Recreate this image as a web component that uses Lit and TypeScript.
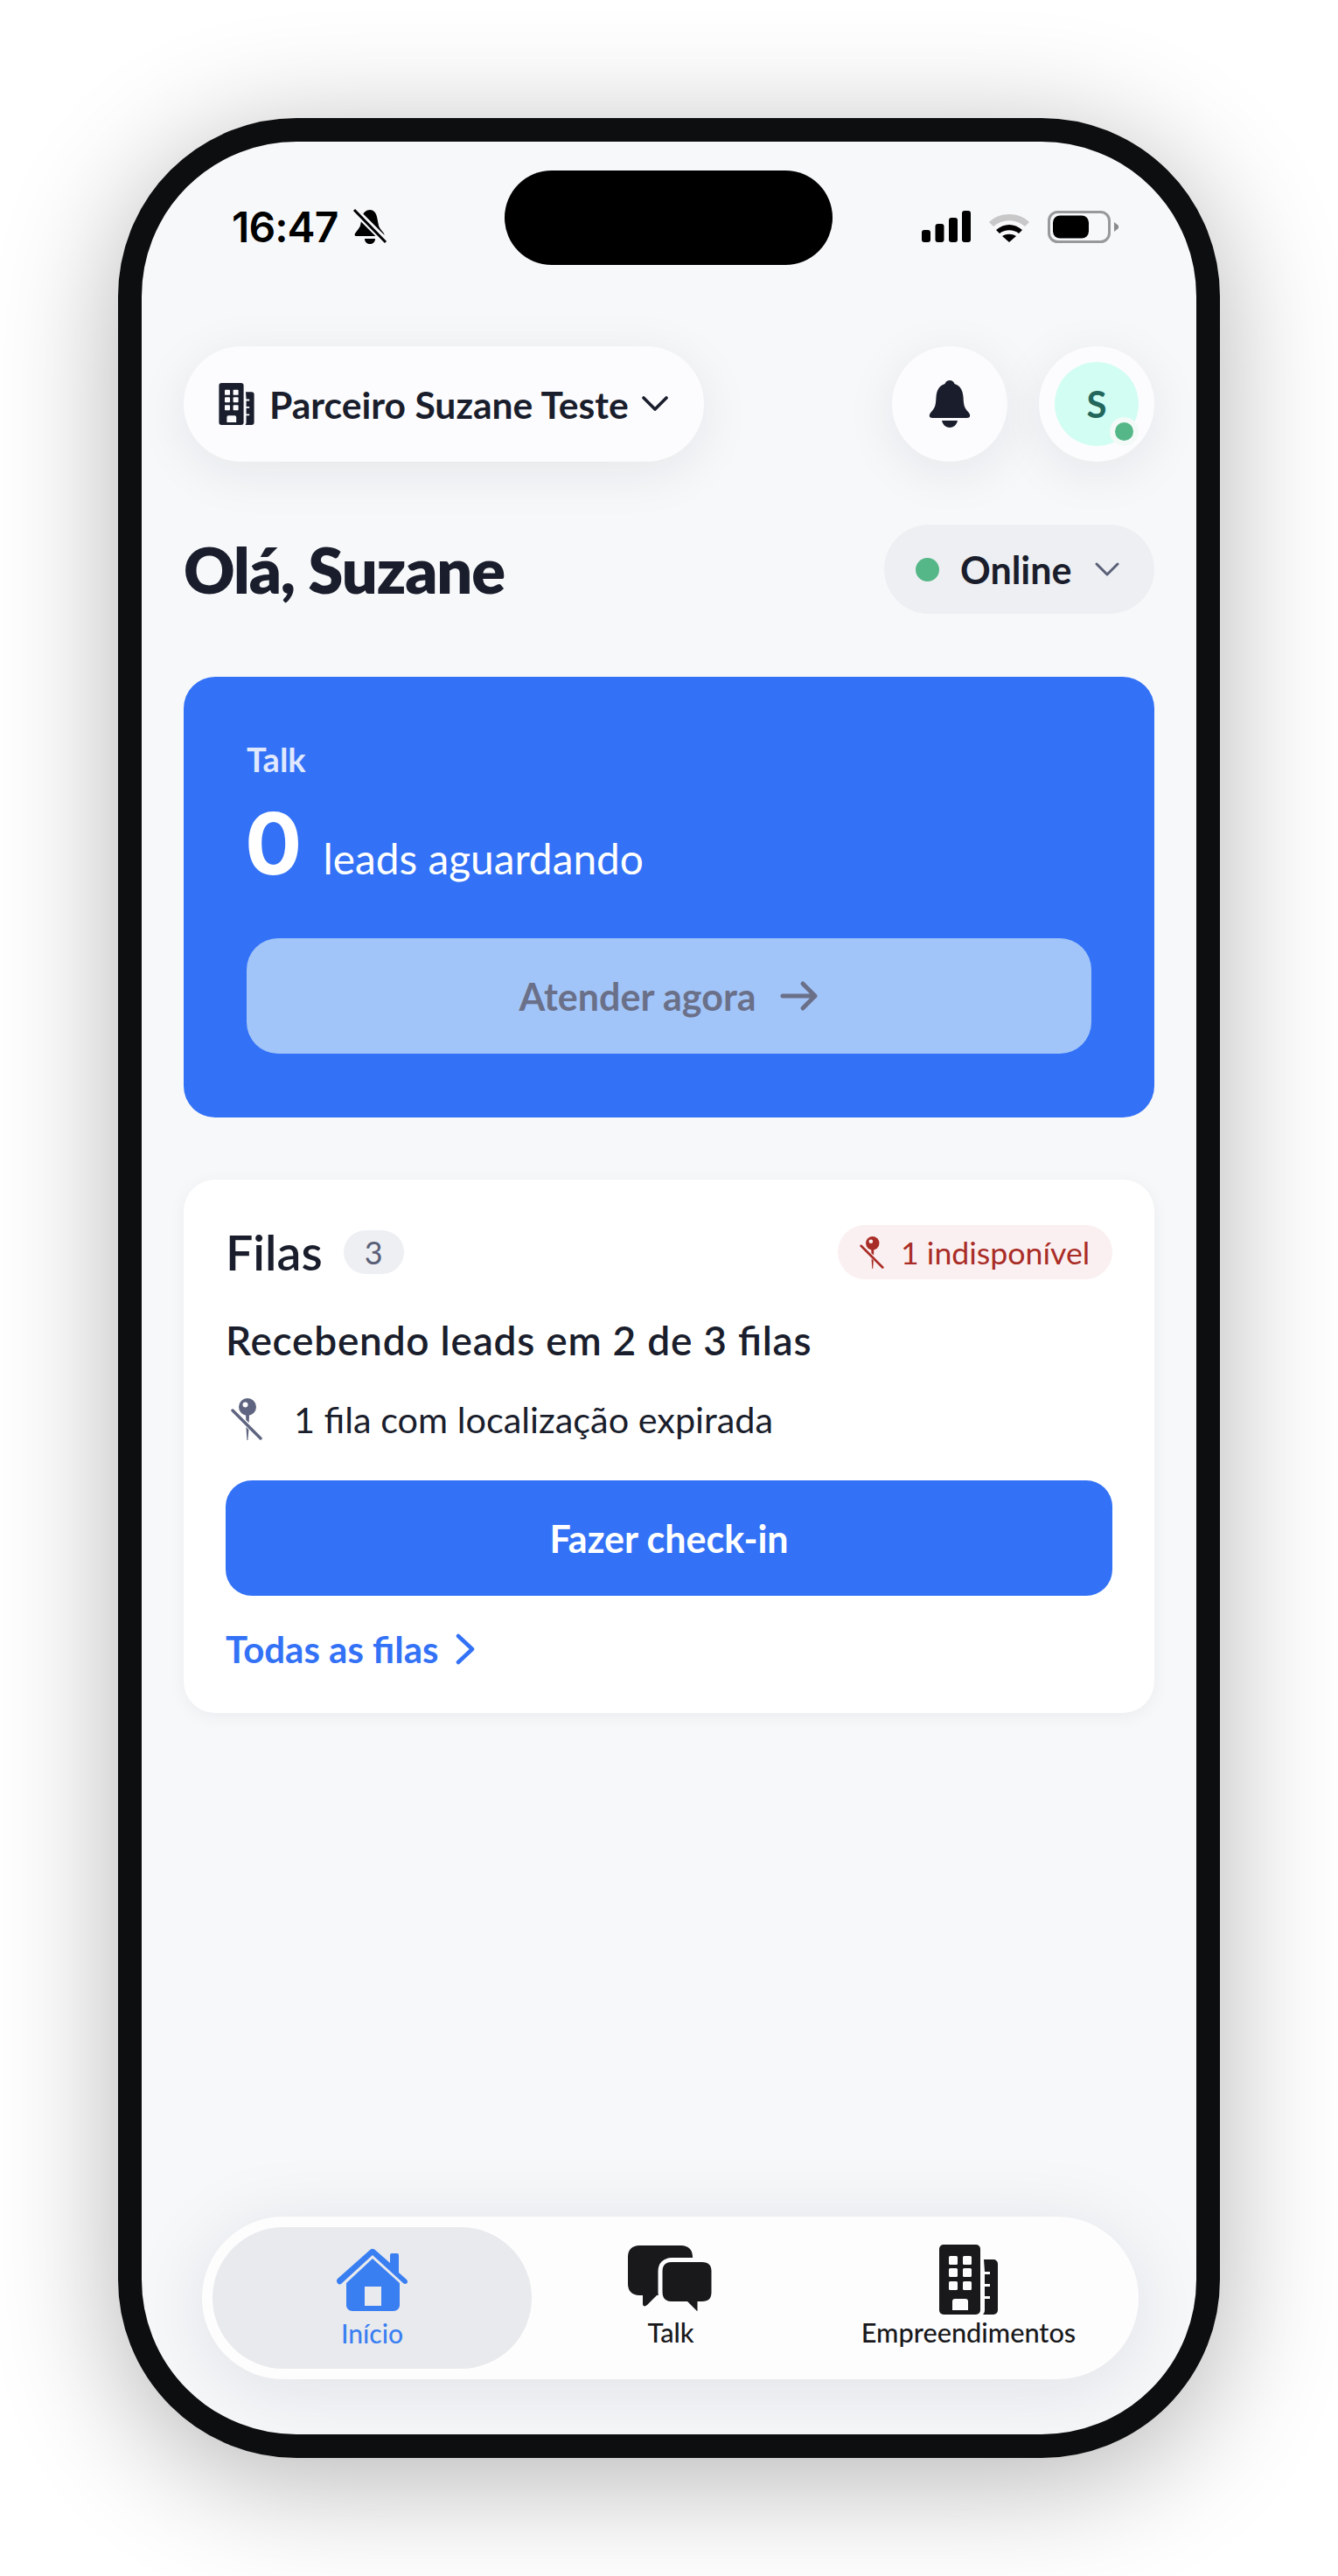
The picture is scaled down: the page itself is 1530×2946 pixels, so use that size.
import { LitElement, html, css, svg } from "lit";
import { customElement } from "lit/decorators.js";

const pin = (color: string, hole: string) => svg`
  <svg class="pin" viewBox="0 0 36 48" fill="none">
    <circle cx="19" cy="10" r="10" fill="${color}"/>
    <circle cx="16.500" cy="7.500" r="3" fill="${hole}"/>
    <path d="M17 19h4l-.3 9-3.400-3z M17.400 33l3 3-1 12h-1z" fill="${color}"/>
    <path d="M2 14 34 46" stroke="${color}" stroke-width="3.400" stroke-linecap="round"/>
  </svg>`;

const building = (color: string, bg: string) => svg`
  <path fill="${color}" d="M5 0h37a5 5 0 0 1 5 5v70a5 5 0 0 1-5 5H5a5 5 0 0 1-5-5V5a5 5 0 0 1 5-5z"/>
  <g fill="${bg}">
    <rect x="11" y="13" width="10" height="10" rx="1.500"/><rect x="27" y="13" width="10" height="10" rx="1.500"/>
    <rect x="11" y="27" width="10" height="10" rx="1.500"/><rect x="27" y="27" width="10" height="10" rx="1.500"/>
    <rect x="11" y="42" width="10" height="10" rx="1.500"/><rect x="27" y="42" width="10" height="10" rx="1.500"/>
    <path d="M15 65a3 3 0 0 1 3-3h12a3 3 0 0 1 3 3v10H15z"/>
  </g>
  <path fill="${color}" d="M51 17h11a5 5 0 0 1 5 5v53a5 5 0 0 1-5 5H50c1-1 2-3 2-5V62h6v-3h-6V48h6v-3h-6V34h6v-3h-6z"/>`;

@customElement("app-root")
export class AppRoot extends LitElement {
  static styles = css`
    :host { display: block; width: 1530px; height: 2946px; background: #fff; overflow: hidden;
      font-family: "Lato", "Liberation Sans", sans-serif; color: #1a1e2c; }
    * { box-sizing: border-box; }
    .page { width: 1530px; height: 2946px; padding: 135px; }
    .phone { width: 1260px; height: 2676px; border: 27px solid #0d0e10; border-radius: 204px;
      box-shadow: 0 24px 140px rgba(0,0,0,.3); background: #f7f8fa; position: relative; overflow: hidden; }
    .screen { height: 100%; display: flex; flex-direction: column; padding: 0 48px; }
    .notch { position: absolute; left: 415px; top: 33px; width: 375px; height: 108px; background: #000; border-radius: 54px; }

    .status { height: 234px; margin: 0 -48px; padding: 76px 0 0 103px; display: flex; align-items: flex-start; flex: none; }
    .time { font: 600 48px/46px "Inter", sans-serif; color: #000; width: 124px; white-space: nowrap; letter-spacing: -.9px; margin-top: -1px; }
    .mute { width: 40px; height: 42px; margin: 0 0 0 14px; flex: none; }
    .sys { margin-left: auto; display: flex; align-items: flex-start; padding-right: 89px; padding-top: 3px; }
    .sys svg { display: block; }
    .signal { width: 56px; height: 36px; }
    .wifi { width: 50px; height: 36px; margin-left: 19px; }
    .bat { width: 81px; height: 37px; margin-left: 19px; }

    .top { display: flex; align-items: center; gap: 36px; flex: none; }
    .org { height: 132px; width: 595px; border-radius: 66px; background: #fcfcfe; display: flex; align-items: center;
      padding-left: 40px; box-shadow: 0 12px 60px rgba(20,24,40,.08); font-weight: 700; font-size: 42.600px; white-space: nowrap; margin-right: auto; }
    .org .b { width: 41px; height: 48px; flex: none; margin-right: 17px; }
    .org .c { width: 32px; height: 20px; margin-left: 14px; flex: none; }
    .round { width: 132px; height: 132px; border-radius: 50%; background: #fcfcfe; box-shadow: 0 12px 60px rgba(20,24,40,.08);
      display: flex; align-items: center; justify-content: center; position: relative; flex: none; }
    .bell { width: 50px; height: 54px; }
    .ava { width: 96px; height: 96px; border-radius: 50%; background: #d2fdf2; color: #23665c; font: 700 42px/96px "Lato", sans-serif; text-align: center; position: relative; }
    .dot { position: absolute; right: 0; bottom: 0; width: 33px; height: 33px; border-radius: 50%; background: #55b788; border: 6px solid #f4faf8; }

    .greet { display: flex; align-items: center; justify-content: space-between; margin-top: 72px; flex: none; }
    h1 { margin: 0; font: 800 72px/102px "Lato", sans-serif; letter-spacing: -1.100px; }
    .online { width: 309px; height: 102px; border-radius: 51px; background: #eeeff2; display: flex; align-items: center; padding-left: 36px; font-weight: 700; font-size: 43px; }
    .online i { width: 27px; height: 27px; border-radius: 50%; background: #55b788; margin-right: 24px; }
    .online svg { width: 30px; height: 18px; margin-left: 26px; }

    .talk { margin-top: 72px; background: #3372f6; border-radius: 36px; padding: 72px; height: 504px; flex: none; color: #fff; }
    .talk .lbl { font: 700 38px/44px "Lato", sans-serif; color: rgba(255,255,255,.86); }
    .talk .num { display: flex; align-items: baseline; margin-top: 16px; height: 118px; }
    .talk .num b { font: 700 97px/118px "Inter", sans-serif; margin: 0 24px 0 -2px; }
    .talk .num span { font: 400 47.800px/118px "Lato", sans-serif; }
    .talk .act { margin-top: 49px; height: 132px; border-radius: 36px; background: #a2c5f9; color: #6b7089; display: flex; align-items: center; justify-content: center; font-weight: 700; font-size: 43px; }
    .talk .act svg { width: 44px; height: 36px; margin-left: 28px; }

    .queues { margin-top: 71px; background: #fff; border-radius: 36px; padding: 52px 48px 0; height: 610px; flex: none; box-shadow: 0 4px 20px rgba(20,24,40,.05); }
    .qh { display: flex; align-items: center; height: 62px; }
    .qh h2 { margin: 0; font: 600 55.500px/62px "Lato", sans-serif; }
    .count { margin-left: 24px; width: 69px; height: 50px; border-radius: 25px; background: #eeeff3; color: #5a6078; font-size: 36px; line-height: 50px; text-align: center; font-weight: 400; }
    .chip { margin-left: auto; height: 62px; width: 314px; border-radius: 31px; background: #fbf0f1; color: #a92d27; display: flex; align-items: center; padding-left: 25px; font-size: 35.700px; white-space: nowrap; }
    .chip .pin { width: 28px; height: 37px; margin-right: 19px; flex: none; }
    .sum { margin-top: 40px; font: 600 46px/60px "Lato", sans-serif; letter-spacing: .75px; font-feature-settings: "liga" 1; white-space: nowrap; }
    .exp { margin-top: 30px; display: flex; align-items: center; font-size: 41.400px; line-height: 60px; white-space: nowrap; }
    .exp .pin { width: 36px; height: 48px; margin: 0 36px 0 6px; flex: none; }
    .cta { margin-top: 40px; height: 132px; border-radius: 30px; background: #3372f6; color: #fff; display: flex; align-items: center; justify-content: center; font-weight: 700; font-size: 43px; }
    .link { margin-top: 34px; display: flex; align-items: center; color: #3372f6; font-weight: 700; font-size: 42px; line-height: 54px; }
    .link svg { width: 24px; height: 36px; margin-left: 18px; }

    .nav { margin: auto 18px 63px 21px; height: 186px; border-radius: 93px; background: #fdfdfe; padding: 12px; display: grid; grid-template-columns: 365px 318px 363px;
      box-shadow: 0 12px 90px rgba(20,24,40,.1); flex: none; }
    .item { border-radius: 81px; display: flex; flex-direction: column; align-items: center; font: 500 30.700px/36px "Lato", sans-serif; color: #19191b; padding-top: 20px; white-space: nowrap; }
    .item svg { display: block; height: 80px; margin-bottom: 3px; }
    .item.on { background: #e9eaed; color: #3a7ff2; font-size: 30px; }
    .i-home { width: 84px; }
    .i-talk { width: 98px; }
    .i-build { width: 68px; }
  `;

  render() {
    return html`<div class="page"><div class="phone"><div class="notch"></div><div class="screen">
      <div class="status">
        <span class="time">16:47</span>
        <svg class="mute" viewBox="0 0 40 42"><path d="M20 2c4 0 7 3 8 8l2 10c.6 3 4 6 6 9 1 2 0 3-2 3H5c-2 0-3-1-2-3 2-3 5-6 6-9l2-10c1-5 5-8 9-8z" fill="#000"/><path d="M14 35h12c0 4-3 6-6 6s-6-2-6-6z" fill="#000"/><path d="M1 1 39 39" stroke="#f7f8fa" stroke-width="8"/><path d="M2 2 38 39" stroke="#000" stroke-width="3"/></svg>
        <div class="sys">
          <svg class="signal" viewBox="0 0 56 36" fill="#000"><rect y="22" width="10" height="14" rx="3"/><rect x="15.500" y="15" width="10" height="21" rx="3"/><rect x="31" y="8" width="10" height="28" rx="3"/><rect x="46" width="10" height="36" rx="3"/></svg>
          <svg class="wifi" viewBox="0 0 50 36"><path d="M2 13C14 1 36 1 48 13l-5 5C32 9 18 9 7 18z" fill="#c8c8c9"/><path d="M10 22c9-8 21-8 30 0l-4 4c-6-5-16-5-22 0z" fill="#000"/><path d="M17 29c5-3 11-3 16 0l-8 7z" fill="#000"/></svg>
          <svg class="bat" viewBox="0 0 81 37"><rect x="1.500" y="1.500" width="69" height="34" rx="10" fill="none" stroke="#98999b" stroke-width="3"/><rect x="6" y="5.500" width="41" height="26" rx="8" fill="#000"/><path d="M76 13l5 4v3l-5 4z" fill="#8a8b8d"/></svg>
        </div>
      </div>

      <div class="top">
        <div class="org">
          <svg class="b" viewBox="0 0 67 80">${building("#1a1e2c", "#fcfcfe")}</svg>
          Parceiro Suzane Teste
          <svg class="c" viewBox="0 0 32 20" fill="none"><path d="M3 3l13 13L29 3" stroke="#1a1e2c" stroke-width="3.600" stroke-linecap="round" stroke-linejoin="round"/></svg>
        </div>
        <div class="round"><svg class="bell" viewBox="0 0 50 54" fill="#1a1e2c"><path d="M25 0c3 0 5 2 5.500 4 7 2 9.500 8 10 15 .5 8 .5 12 6 17.500 2.500 3 2.500 6.500-2 6.500H5.500c-4.500 0-4.500-3.500-2-6.500C9 31 9 27 9.500 19 10 12 12.500 6 19.500 4 20 2 22 0 25 0z"/><path d="M16 46h18c-1 5-5 8-9 8s-8-3-9-8z"/></svg></div>
        <div class="round"><div class="ava">S<span class="dot"></span></div></div>
      </div>

      <div class="greet">
        <h1>Olá, Suzane</h1>
        <div class="online"><i></i>Online<svg viewBox="0 0 30 18" fill="none"><path d="M3 3l12 12L27 3" stroke="#5a6078" stroke-width="3" stroke-linecap="round" stroke-linejoin="round"/></svg></div>
      </div>

      <div class="talk">
        <div class="lbl">Talk</div>
        <div class="num"><b>0</b><span>leads aguardando</span></div>
        <div class="act">Atender agora<svg viewBox="0 0 44 36" fill="none"><path d="M3 18h37M26 4l14 14-14 14" stroke="#6b7089" stroke-width="5" stroke-linecap="round" stroke-linejoin="round"/></svg></div>
      </div>

      <div class="queues">
        <div class="qh"><h2>Filas</h2><span class="count">3</span>
          <span class="chip">${pin("#a92d27", "#fbf0f1")}1 indisponível</span></div>
        <div class="sum">Recebendo leads em 2 de 3 filas</div>
        <div class="exp">${pin("#5f6580", "#fff")}1 fila com localização expirada</div>
        <div class="cta">Fazer check-in</div>
        <div class="link">Todas as filas<svg viewBox="0 0 24 36" fill="none"><path d="M4 3l16 15L4 33" stroke="#3372f6" stroke-width="4.500" stroke-linecap="round" stroke-linejoin="round"/></svg></div>
      </div>

      <div class="nav">
        <div class="item on">
          <svg class="i-home" viewBox="0 0 84 80" fill="#3a7ff2"><path d="M2 39 38 7c3-3 5-3 8 0l16 14V12a2 2 0 0 1 2-2h6a2 2 0 0 1 2 2v20l9 8c3 3-1 7-4 4L42 12 6 45c-3 2-7-3-4-6z"/><path fill-rule="evenodd" d="M42 16l31 28v25c0 4-3 7-7 7H19c-4 0-7-3-7-7V44zM33 48v22h19V48z"/></svg>
          Início
        </div>
        <div class="item">
          <svg class="i-talk" viewBox="0 0 98 80"><path fill="#19191b" d="M13 1h48c8 0 13 5 13 13v44H33l-11 11c-2 2-5 2-5-1V58h-4C5 58 0 53 0 45V14C0 6 5 1 13 1z"/><path fill="#19191b" stroke="#fdfdfe" stroke-width="5" d="M50 17.500h35c8 0 13 5 13 13v24c0 8-5 13-13 13h-3v8c0 3-3 4-5 2L67 67.500H50c-8 0-13-5-13-13v-24c0-8 5-13 13-13z"/></svg>
          Talk
        </div>
        <div class="item">
          <svg class="i-build" viewBox="0 0 68 80">${building("#19191b", "#fdfdfe")}</svg>
          Empreendimentos
        </div>
      </div>
    </div></div></div>`;
  }
}
